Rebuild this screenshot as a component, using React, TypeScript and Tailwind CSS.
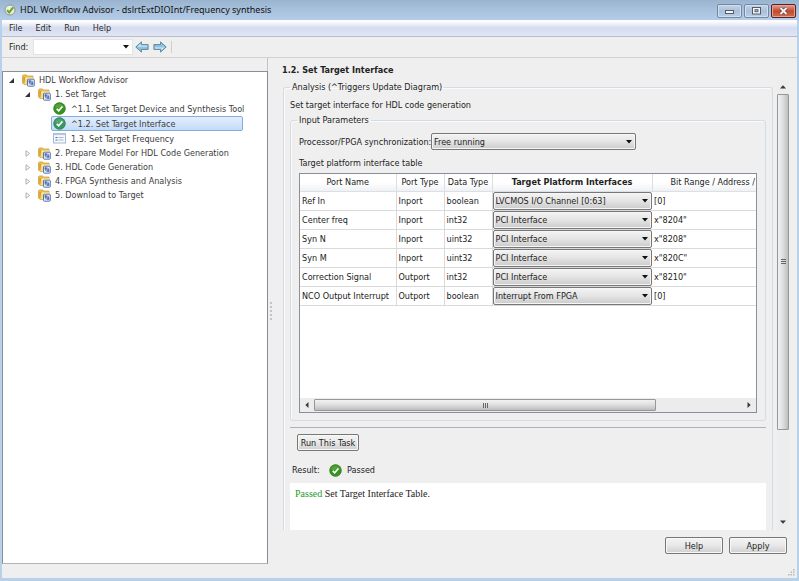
import { useState, type ReactNode } from 'react';
import clsx from 'clsx';

const menus = ['File', 'Edit', 'Run', 'Help'];

const tasks = [
  { label: '^1.1. Set Target Device and Synthesis Tool', status: 'passed' },
  { label: '^1.2. Set Target Interface', status: 'passed' },
  { label: '1.3. Set Target Frequency', status: 'pending' },
];

const closedFolders = [
  '2. Prepare Model For HDL Code Generation',
  '3. HDL Code Generation',
  '4. FPGA Synthesis and Analysis',
  '5. Download to Target',
];

const interfaces = ['LVCMOS I/O Channel [0:63]', 'PCI Interface', 'Interrupt From FPGA'];

const ports = [
  { name: 'Ref In', port: 'Inport', type: 'boolean', target: 'LVCMOS I/O Channel [0:63]', range: '[0]' },
  { name: 'Center freq', port: 'Inport', type: 'int32', target: 'PCI Interface', range: 'x"8204"' },
  { name: 'Syn N', port: 'Inport', type: 'uint32', target: 'PCI Interface', range: 'x"8208"' },
  { name: 'Syn M', port: 'Inport', type: 'uint32', target: 'PCI Interface', range: 'x"820C"' },
  { name: 'Correction Signal', port: 'Outport', type: 'int32', target: 'PCI Interface', range: 'x"8210"' },
  { name: 'NCO Output Interrupt', port: 'Outport', type: 'boolean', target: 'Interrupt From FPGA', range: '[0]' },
];

/* Icons */

function AppIcon() {
  return (
    <svg width="12" height="12" viewBox="0 0 12 12" className="shrink-0">
      <circle cx="6" cy="6" r="5" fill="#e9efdf" stroke="#8a9a86" strokeWidth="1" />
      <path d="M3 6.2 5.2 8.4 9.2 3.4" fill="none" stroke="#6f9f2c" strokeWidth="2" />
    </svg>
  );
}

function FolderIcon() {
  return (
    <svg width="13" height="13" viewBox="0 0 13 13" className="shrink-0">
      <path d="M.5 2 1.300.900h3.200l1 1.100h5.500v8.500H2L.5 9z" fill="#e9bd52" stroke="#cf9a30" strokeWidth=".7" />
      <path d="M1.300 3h2v6.500l-2-1z" fill="#d99f2a" />
      <path d="M3.300 3.600h7.900l-.7 6.700H2.400z" fill="#f7dc86" />
      <path d="M3.500 3.800h7.500v1H3.400z" fill="#fdf2c0" />
      <rect x="5.500" y="5.200" width="6.800" height="7" rx=".8" fill="#e6edf9" stroke="#4a68ae" strokeWidth=".9" />
      <path d="M6.900 6.600h1.600v1.800H6.900zM9.400 8.600h1.600v2H9.400z" fill="#5d80c4" stroke="#34559f" strokeWidth=".5" />
      <path d="M7.700 8.600v1.400h1.500M8.800 7.200h1.500v1.200" fill="none" stroke="#34559f" strokeWidth=".6" />
    </svg>
  );
}

function PassedIcon({ selected = false }: { selected?: boolean }) {
  return (
    <svg width="13" height="13" viewBox="0 0 13 13" className="shrink-0">
      <circle cx="6.5" cy="6.5" r="5.9" fill={selected ? '#38975f' : '#389320'} stroke={selected ? '#2a7f58' : '#2c7d17'} strokeWidth=".6" />
      <path d="M2 5.2a4.8 4.8 0 0 1 9 0C9 6.6 4.500 6.600 2 5.200z" fill="#ffffff" opacity=".14" />
      <path d="M3.700 6.800 5.700 8.700 9.400 4.500" fill="none" stroke="#fff" strokeWidth="1.700" />
    </svg>
  );
}

function PendingIcon() {
  return (
    <svg width="13" height="11" viewBox="0 0 13 11" className="shrink-0">
      <rect x=".5" y=".5" width="12" height="9.500" fill="#f4f7fc" stroke="#a5b6d4" />
      <path d="M.5.5h12v1.600H.5z" fill="#b9c8e2" />
      <path d="M2.500 4.500h2M2.500 7h2" stroke="#4a6fb5" strokeWidth="1.200" />
      <path d="M5.500 4.500h5M5.500 7h5" stroke="#a9b7cf" strokeWidth="1" />
    </svg>
  );
}

function Twisty({ open = false }: { open?: boolean }) {
  return (
    <svg width="6" height="7" viewBox="0 0 6 7" className="shrink-0">
      {open ? (
        <path d="M5 1v5H0z" fill="#333" />
      ) : (
        <path d="M1 .8 4.600 3.500 1 6.200z" fill="#fff" stroke="#9a9a9a" strokeWidth=".8" />
      )}
    </svg>
  );
}

function FindArrow({ next = false }: { next?: boolean }) {
  return (
    <svg width="14" height="12" viewBox="0 0 14 12" className={clsx('shrink-0', next && 'rotate-180')}>
      <path
        d="M.8 6 6.400.900v2.700h6.700v4.800H6.400v2.700z"
        fill="#8fc3e3"
        stroke="#4a7088"
        strokeWidth=".8"
        strokeLinejoin="round"
      />
      <path d="M2.500 5.600 5.600 2.800v1.700h6.600v1.100z" fill="#d4ecf8" />
    </svg>
  );
}

function Caret({ className = '' }: { className?: string }) {
  return (
    <svg width="6" height="4" viewBox="0 0 6 4" className={clsx('shrink-0', className)}>
      <path d="M0 0h6L3 3.400z" fill="#111" />
    </svg>
  );
}

function ScrollArrow({ className = '' }: { className?: string }) {
  return (
    <svg width="6" height="6" viewBox="0 0 6 6" className={clsx('shrink-0', className)}>
      <path d="M0 4.500 3 1.300 6 4.500z" fill="#3a3a3a" />
    </svg>
  );
}

/* Controls */

function Combo({ label, value, options, className }: { label: string; value: string; options: string[]; className?: string }) {
  return (
    <span className={clsx('relative flex', className)}>
      <select
        aria-label={label}
        defaultValue={value}
        className="h-full w-full appearance-none rounded-[2px] border border-[#777] bg-linear-to-b from-[#f4f4f4] via-[#e4e4e4] to-[#cbcbcb] px-[2px] shadow-[inset_0_0_0_1px_#f6f6f6]"
      >
        {options.map((o) => (
          <option key={o}>{o}</option>
        ))}
      </select>
      <Caret className="pointer-events-none absolute top-1/2 right-1 -translate-y-1/2" />
    </span>
  );
}

function PushButton({ children, className }: { children: ReactNode; className?: string }) {
  return (
    <button
      type="button"
      className={clsx(
        'h-[17px] rounded-[2px] border border-[#777] bg-linear-to-b from-[#f4f4f4] via-[#e8e8e8] to-[#cfcfcf] shadow-[inset_0_0_0_1px_#f8f8f8]',
        className,
      )}
    >
      {children}
    </button>
  );
}

function TreeFolder({ label, open, className }: { label: string; open?: boolean; className?: string }) {
  return (
    <div className={clsx('flex h-[14px] items-center', className)}>
      <Twisty open={open} />
      <span className="w-[7px]" />
      <FolderIcon />
      <span className="pl-1">{label}</span>
    </div>
  );
}

function TitleBar() {
  return (
    <header className="flex h-5 shrink-0 items-center bg-linear-to-b from-[#9ab4d0] to-[#b5cde8] pl-1">
      <AppIcon />
      <h1 className="flex-1 pl-1 font-['Noto_Sans',sans-serif] text-[9px] text-[#111]">
        HDL Workflow Advisor - dslrtExtDIOInt/Frequency synthesis
      </h1>
      <div className="flex gap-[2px] pt-[1px] pr-[3px]">
        <button
          type="button"
          aria-label="Minimize"
          className="flex h-[14px] w-[25px] items-center justify-center rounded-[2px] border border-[#7488a3] bg-linear-to-b from-[#c3d4e8] via-[#a9c0da] to-[#b9cfe7] shadow-[inset_0_0_0_1px_#d0dfef]"
        >
          <svg width="9" height="8" viewBox="0 0 9 8">
            <rect x=".5" y="3.500" width="8" height="3" fill="#f5f5f5" stroke="#555b66" />
          </svg>
        </button>
        <button
          type="button"
          aria-label="Maximize"
          className="flex h-[14px] w-[25px] items-center justify-center rounded-[2px] border border-[#7488a3] bg-linear-to-b from-[#c3d4e8] via-[#a9c0da] to-[#b9cfe7] shadow-[inset_0_0_0_1px_#d0dfef]"
        >
          <svg width="9" height="8" viewBox="0 0 9 8">
            <rect x=".5" y=".5" width="8" height="6.500" fill="#f5f5f5" stroke="#555b66" />
            <rect x="3" y="2.700" width="3" height="2" fill="#a9c0da" stroke="#555b66" strokeWidth=".9" />
          </svg>
        </button>
        <button
          type="button"
          aria-label="Close"
          className="flex h-[14px] w-[25px] items-center justify-center rounded-[2px] border border-[#5c1f26] bg-linear-to-b from-[#e3a091] via-[#c4492c] to-[#d26a48] shadow-[inset_0_0_0_1px_#e0a497]"
        >
          <svg width="9" height="8" viewBox="0 0 9 8">
            <path d="M1.500 1 7.500 7M7.500 1 1.500 7" stroke="#4d3a44" strokeWidth="3.200" />
            <path d="M1.500 1 7.500 7M7.500 1 1.500 7" stroke="#f5f5f5" strokeWidth="2" />
          </svg>
        </button>
      </div>
    </header>
  );
}

function TaskTree() {
  const [selected, setSelected] = useState(1);

  return (
    <nav className="flex-1 border border-t-[#8a8f99] border-r-[#8a8a96] border-b-[#b4b4b8] border-l-[#8a8f99] bg-white text-[#3c3c3c]">
      <TreeFolder label="HDL Workflow Advisor" open className="mt-[1px] pl-[6px]" />
      <TreeFolder label="1. Set Target" open className="pl-[22px]" />
      <ul className="flex flex-col pl-12">
        {tasks.map((task, i) => (
          <li key={task.label} className="flex">
            <button
              type="button"
              onClick={() => setSelected(i)}
              className={clsx(
                'flex h-[15px] w-[192px] items-center rounded-[2px] border pl-[1px] text-left whitespace-nowrap',
                i === selected
                  ? 'border-[#84acdd] bg-linear-to-b from-[#e4effc] to-[#c3dbf9]'
                  : 'border-transparent',
              )}
            >
              {task.status === 'passed' ? <PassedIcon selected={i === selected} /> : <PendingIcon />}
              <span className="pl-[5px]">{task.label}</span>
            </button>
          </li>
        ))}
      </ul>
      {closedFolders.map((label) => (
        <TreeFolder key={label} label={label} className="pl-[22px]" />
      ))}
    </nav>
  );
}

function InterfaceTable() {
  return (
    <div className="flex h-60 flex-col border border-[#8a8f99] bg-white">
      <div className="flex-1 overflow-hidden">
        <table aria-label="Target platform interface table" className="w-full table-fixed border-collapse">
          <colgroup>
            <col className="w-24" />
            <col className="w-12" />
            <col className="w-12" />
            <col className="w-40" />
            <col />
          </colgroup>
          <thead>
            <tr className="h-[17px] bg-linear-to-b from-white via-white to-[#eff1f4]">
              {['Port Name', 'Port Type', 'Data Type'].map((h) => (
                <th key={h} scope="col" className="border-r border-b border-[#dcdfe3] p-0 font-normal whitespace-nowrap">
                  {h}
                </th>
              ))}
              <th scope="col" className="border-r border-b border-[#dcdfe3] p-0 font-bold whitespace-nowrap">
                Target Platform Interfaces
              </th>
              <th scope="col" className="border-b border-[#dcdfe3] p-0 pl-[18px] text-left font-normal whitespace-nowrap">
                Bit Range / Address /
              </th>
            </tr>
          </thead>
          <tbody>
            {ports.map((p) => (
              <tr key={p.name} className="h-[19px]">
                <td className="border-r border-b border-[#dadada] p-0 pl-[2px] whitespace-nowrap">{p.name}</td>
                <td className="border-r border-b border-[#dadada] p-0 pl-[2px]">{p.port}</td>
                <td className="border-r border-b border-[#dadada] p-0 pl-[2px]">{p.type}</td>
                <td className="border-b border-[#dadada] p-0">
                  <Combo label={`${p.name} interface`} value={p.target} options={interfaces} className="h-[18px]" />
                </td>
                <td className="border-b border-[#dadada] p-0 pl-[2px]">{p.range}</td>
              </tr>
            ))}
          </tbody>
        </table>
      </div>
      {/* horizontal scroll bar */}
      <div className="flex h-[14px] shrink-0 items-center bg-[#ececec] px-1">
        <ScrollArrow className="-rotate-90" />
        <div className="flex flex-1 px-1">
          <div className="flex h-3 w-4/5 items-center justify-center gap-[1px] rounded-[1px] border border-[#979797] bg-linear-to-b from-[#f2f2f2] via-[#dedede] to-[#bdbdbd]">
            <span className="h-[5px] w-px bg-[#666]" />
            <span className="h-[5px] w-px bg-[#666]" />
            <span className="h-[5px] w-px bg-[#666]" />
          </div>
        </div>
        <ScrollArrow className="rotate-90" />
      </div>
    </div>
  );
}

function TaskPanel() {
  return (
    <main className="flex min-w-0 flex-1 flex-col pr-2 pl-2">
      <h2 className="mt-[5px] h-[14px] shrink-0 font-bold">1.2. Set Target Interface</h2>
      <div className="mt-[2px] flex min-h-0 flex-1">
        <div className="min-w-0 flex-1 overflow-hidden pt-[1px] pl-[1px]">
          <fieldset className="h-full min-w-0 rounded-t-[3px] border border-b-0 border-[#d3dce4] px-[6px] shadow-[inset_1px_1px_0_#fafafa]">
            <legend className="px-[2px]">Analysis (^Triggers Update Diagram)</legend>
            <p className="mt-1">Set target interface for HDL code generation</p>
            <fieldset className="mt-[1px] min-w-0 rounded-[3px] border border-[#d3dce4] pr-2 pb-[7px] pl-2 shadow-[inset_1px_1px_0_#fafafa]">
              <legend className="-ml-[2px] px-[2px]">Input Parameters</legend>
              <div className="mt-[6px] flex h-[17px] items-center">
                <span className="w-[132px] whitespace-nowrap">Processor/FPGA synchronization:</span>
                <Combo
                  label="Processor/FPGA synchronization"
                  value="Free running"
                  options={['Free running']}
                  className="h-[17px] w-[205px]"
                />
              </div>
              <p className="mt-[6px] mb-[3px]">Target platform interface table</p>
              <InterfaceTable />
            </fieldset>
            <hr className="mt-[6px] border-[#b0b0b0]" />
            <PushButton className="mt-[6px] ml-[7px] w-[62px] whitespace-nowrap">Run This Task</PushButton>
            <div className="mt-3 flex h-[14px] items-center pl-[2px]">
              <span className="w-[37px]">Result:</span>
              <PassedIcon />
              <span className="pl-[5px]">Passed</span>
            </div>
            <div className="mt-[6px] h-[60px] bg-white px-[5px] pt-1 font-['Liberation_Serif',serif] text-[10px] text-[#222]">
              <span className="text-[#1f9a1f]">Passed</span> Set Target Interface Table.
            </div>
          </fieldset>
        </div>
        {/* vertical scroll bar */}
        <div className="ml-1 flex w-3 shrink-0 flex-col items-center bg-[#ededed] py-[5px]">
          <ScrollArrow />
          <div className="flex w-full flex-1 flex-col pt-1">
            <div className="flex h-[79%] w-full flex-col items-center justify-center gap-[1px] rounded-[1px] border border-[#979797] bg-linear-to-r from-[#f2f2f2] via-[#dedede] to-[#bdbdbd]">
              <span className="h-px w-[5px] bg-[#666]" />
              <span className="h-px w-[5px] bg-[#666]" />
              <span className="h-px w-[5px] bg-[#666]" />
            </div>
          </div>
          <ScrollArrow className="rotate-180" />
        </div>
      </div>
      <footer className="flex shrink-0 justify-end gap-[6px] pt-[7px] pr-[2px] pb-[10px]">
        <PushButton className="w-[58px]">Help</PushButton>
        <PushButton className="w-[58px]">Apply</PushButton>
      </footer>
    </main>
  );
}

export default function App() {
  const [query, setQuery] = useState('');

  return (
    <div className="flex h-screen flex-col bg-[#b7d1eb] font-['DejaVu_Sans_Condensed','DejaVu_Sans',sans-serif] text-[9px] leading-[14px] text-[#222]">
      <TitleBar />
      <div className="mx-[2px] mb-[3px] flex min-h-0 flex-1 flex-col bg-[#efefef]">
        <nav className="flex h-[17px] shrink-0 items-center gap-[13px] border-b border-[#b8bcc8] bg-linear-to-b from-[#fbfcfe] from-10% via-[#d6dcef] via-50% to-[#e1e6f5] pl-[7px]">
          {menus.map((m) => (
            <button key={m} type="button" className="text-[#2a2a2a]">
              {m}
            </button>
          ))}
        </nav>

        <div className="flex h-[21px] shrink-0 items-center border-b border-[#d0d0d0] pl-[7px]">
          <label htmlFor="find" className="w-6">
            Find:
          </label>
          <div className="flex h-4 w-[100px] items-center border border-[#e0e3ea] bg-white pr-[3px]">
            <input
              id="find"
              value={query}
              onChange={(e) => setQuery(e.target.value)}
              className="min-w-0 flex-1 px-1 outline-none"
            />
            <Caret />
          </div>
          <div className="flex items-center gap-1 border-r border-[#cfcfcf] pr-1 pl-[2px]">
            <button type="button" aria-label="Find previous">
              <FindArrow />
            </button>
            <button type="button" aria-label="Find next">
              <FindArrow next />
            </button>
          </div>
        </div>

        <div className="flex min-h-0 flex-1">
          <div className="flex w-[266px] shrink-0 flex-col">
            <div className="h-[13px] shrink-0 border-r border-[#c4c4c4]" />
            <TaskTree />
          </div>
          {/* splitter */}
          <div className="flex w-[6px] shrink-0 flex-col items-center justify-center gap-[2px]">
            {[0, 1, 2, 3, 4].map((i) => (
              <span key={i} className="size-[2px] rounded-full bg-[#b5b5b5]" />
            ))}
          </div>
          <TaskPanel />
        </div>

        <div className="flex h-[14px] shrink-0 items-end justify-end pr-[2px] pb-[2px]">
          <svg width="7" height="7" viewBox="0 0 7 7" fill="#b9b9b9">
            <path d="M5 0h1.500v1.500H5zM2.500 2.500H4V4H2.500zM5 2.500h1.500V4H5zM0 5h1.500v1.500H0zM2.500 5H4v1.500H2.500zM5 5h1.500v1.500H5z" />
          </svg>
        </div>
      </div>
    </div>
  );
}
